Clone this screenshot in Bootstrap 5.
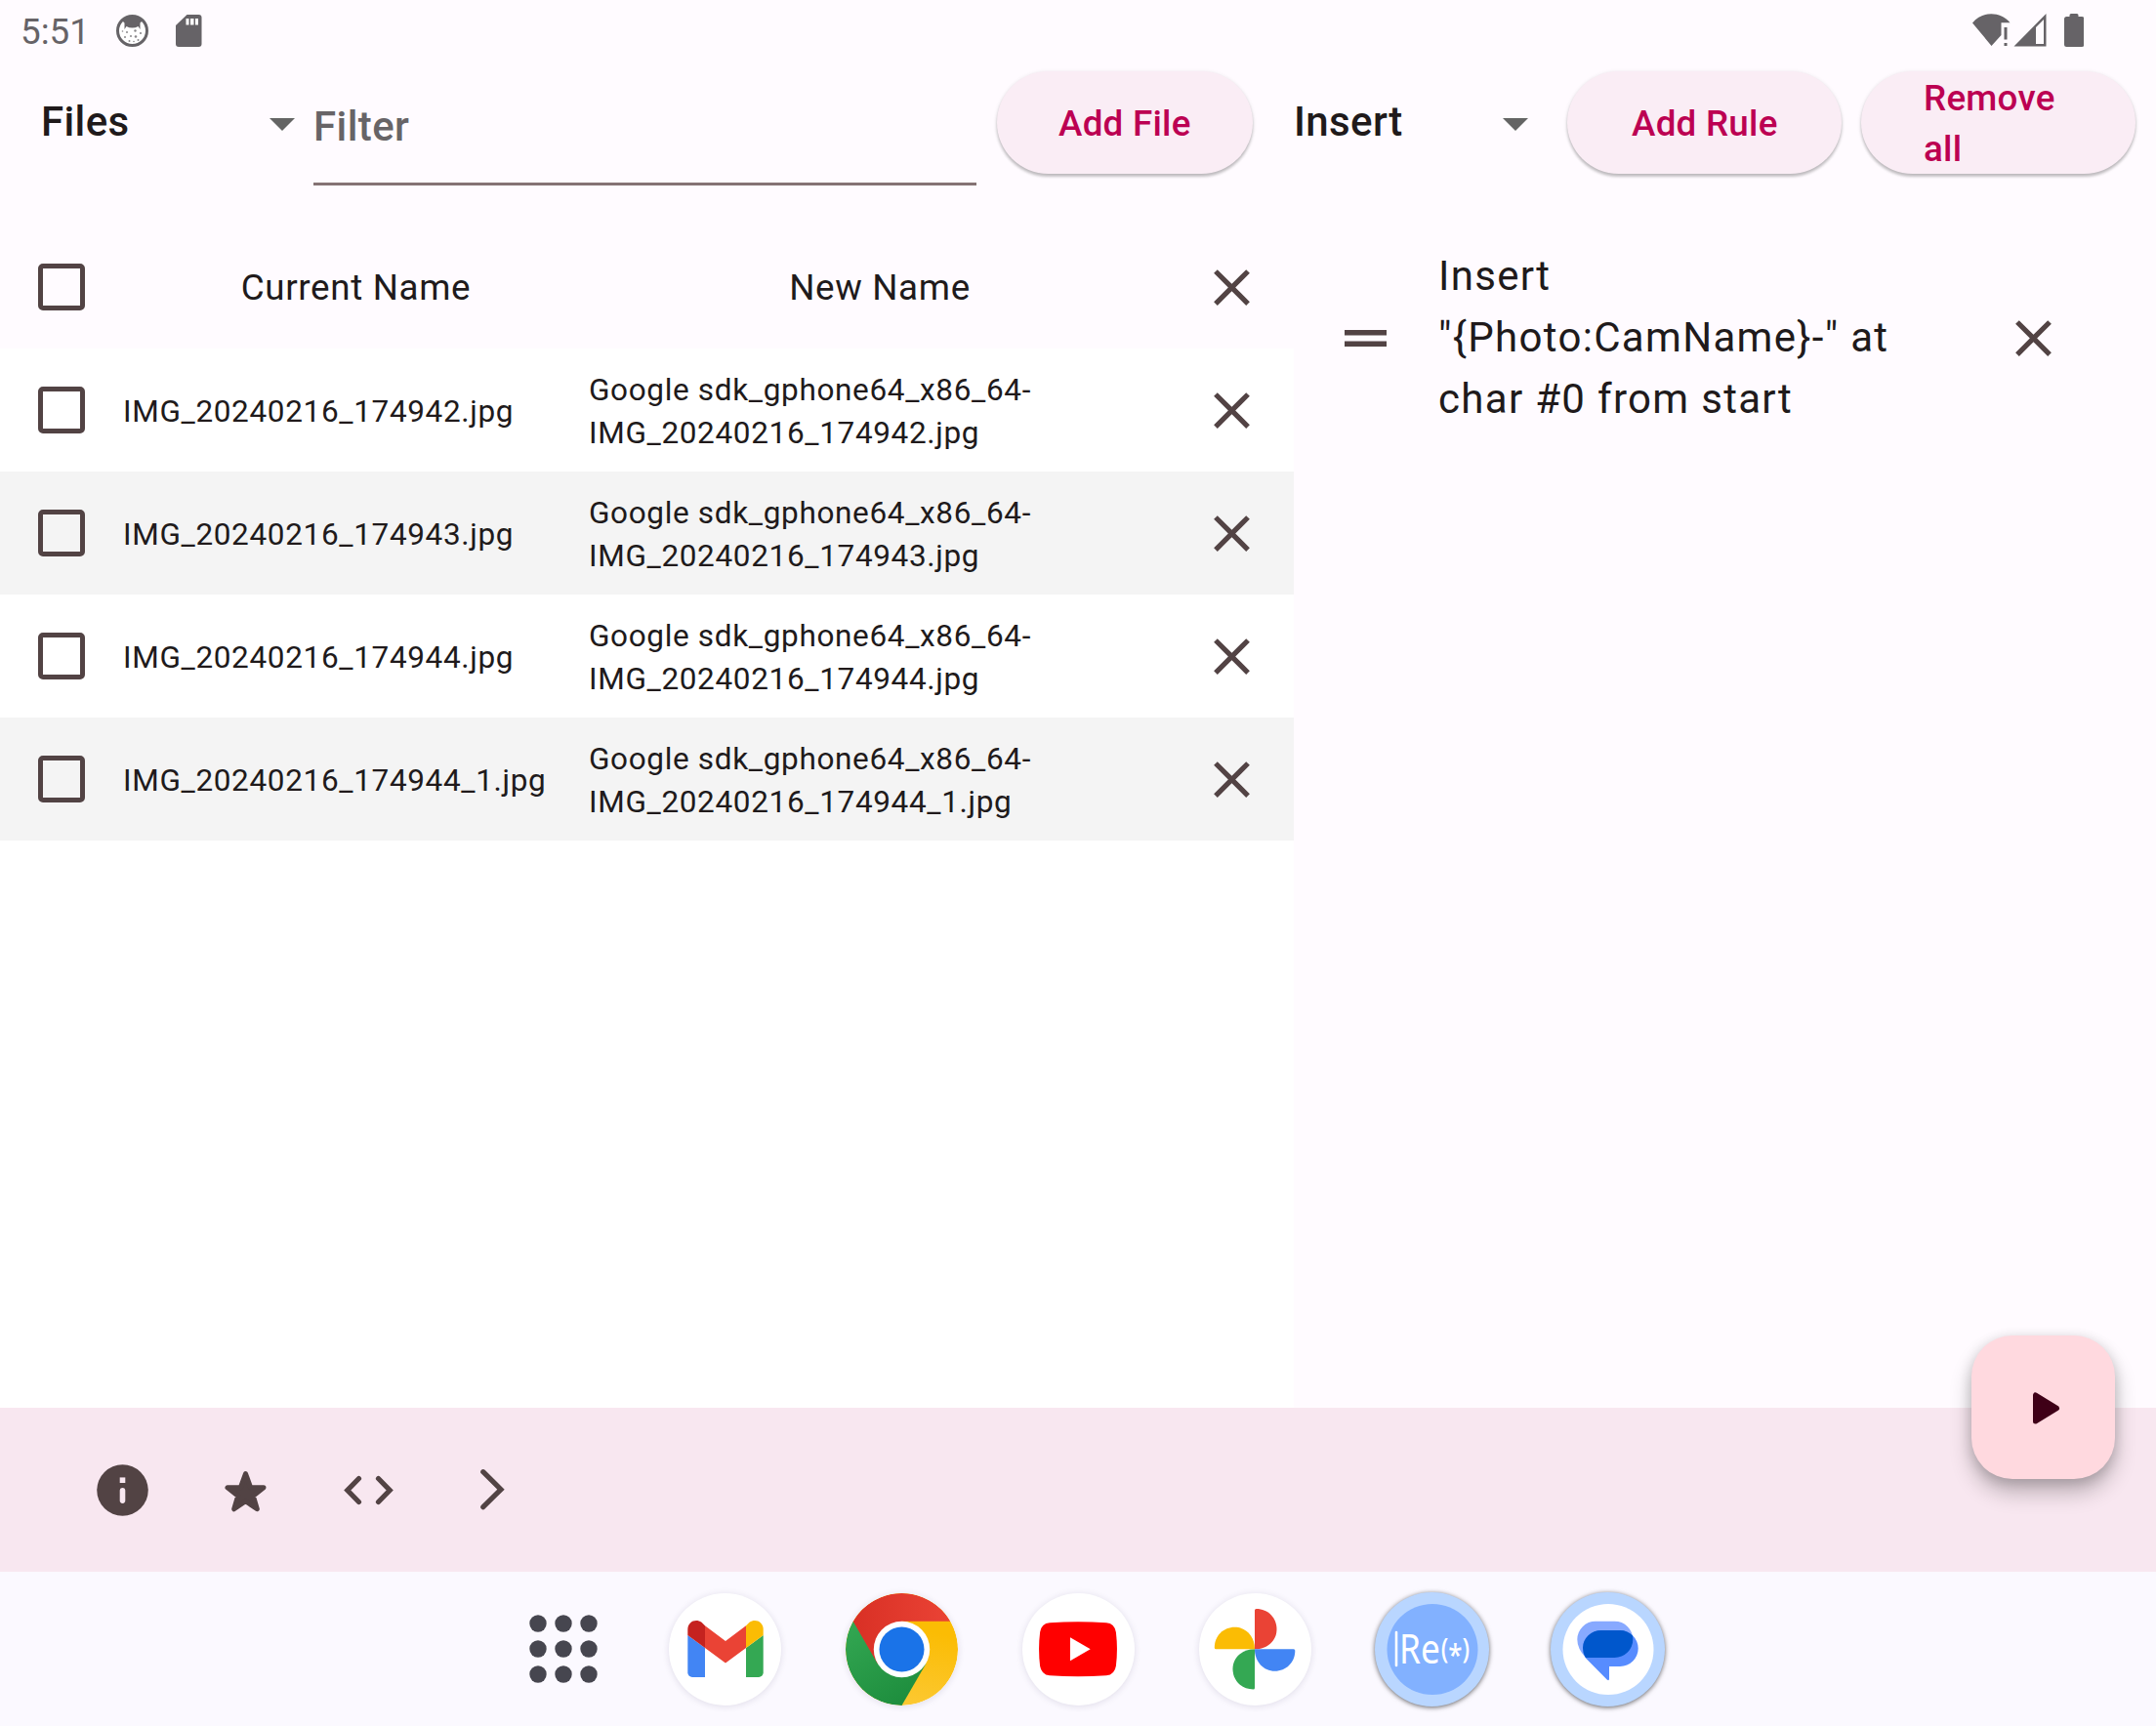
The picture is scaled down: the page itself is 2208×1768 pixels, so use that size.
<!DOCTYPE html>
<html lang="en">
<head>
<meta charset="utf-8">
<title>Renamer</title>
<meta name="viewport" content="width=device-width, initial-scale=1">
<link rel="stylesheet" href="https://cdn.jsdelivr.net/npm/bootstrap@5.3.0/dist/css/bootstrap.min.css">
<style>
  body { font-family: Roboto, sans-serif; background: #fffbff; color: #201a1b; width: 2208px; height: 1768px; overflow: hidden; }
  svg { display: block; flex: none; }
  .statusbar { height: 63px; padding: 0 74px 0 21px; color: #666367; font-size: 36.75px; line-height: 63px; }
  .clock { padding-top: 2px; }
  .tray-icons { margin-left: 27px; }
  .toolbar-row { height: 168px; }
  .files-side { width: 1325px; }
  .picker { font-size: 42px; font-weight: 500; letter-spacing: .39px; line-height: 63px; height: 126px; }
  .picker-files { width: 279px; margin-left: 42px; padding: 30px 19px 0 0; }
  .picker-rules { width: 254px; padding: 30px 14px 0 0; }
  .picker svg { margin-top: 28px; }
  .filter-input { width: 679px; height: 127px; border: 0; border-bottom: 3px solid #857374; background: none; font-size: 42px; font-weight: 500; letter-spacing: .4px; padding: 8px 0 0; color: #201a1b; border-radius: 0; }
  .filter-input::placeholder { color: #676467; opacity: 1; }
  .pill, .pill:hover { height: 105px; border: 0; border-radius: 53px; background: #faedf5; color: #bc0052; font-size: 36.75px; font-weight: 500; letter-spacing: .26px; line-height: 52px; text-align: left; box-shadow: 0 3px 3px rgba(0,0,0,.2), 0 1px 4px rgba(0,0,0,.12); margin-top: 10px; }
  .pill-file { width: 262px; margin-left: 21px; padding: 3px 0 0 63px; }
  .pill-rule { width: 281px; margin-left: 26px; padding: 3px 0 0 66px; }
  .pill-clear { width: 281px; margin-left: 20px; padding: 2px 63px 0 64px; }
  .main-area { height: 1211px; }
  .file-row { height: 126px; font-size: 31.5px; letter-spacing: .66px; line-height: 44px; }
  .file-row .cell-current, .file-row .cell-new { padding-top: 4px; }
  .file-head { font-size: 36.75px; text-align: center; }
  .file-head .cell-current, .file-head .cell-new { padding-top: 2px; }
  .file-list { background: #fff; }
  .file-row.shaded { background: #f4f4f4; }
  .cell-icon { width: 126px; height: 126px; color: #524344; }
  .files-side .cell-icon svg { margin-right: 1px; }
  .cell-current { width: 477px; }
  .cell-new { width: 596px; }
  .form-check-input.tick { width: 48px; height: 48px; border: 5.25px solid #524344; border-radius: 5px; background: none; margin: 0; }
  .rule-row { height: 231px; padding-left: 42px; }
  .rule-handle { width: 63px; color: #524344; }
  .rule-text { width: 546px; margin-left: 43px; padding-bottom: 2px; font-size: 42px; letter-spacing: 1.31px; line-height: 63px; }
  .bottom-bar { height: 168px; background: #f8e7f0; padding-left: 62.500px; color: #524344; }
  .run-fab { right: 42px; top: -74px; width: 147px; height: 147px; border-radius: 42px; background: #ffd9df; border: 0; padding: 0; color: #3f0017; box-shadow: 0 14px 22px rgba(0,0,0,.24), 0 3px 13px rgba(0,0,0,.16); }
  .taskbar { height: 158px; background: #fbf9ff; padding-left: 542px; }
  .app-icon { width: 115px; height: 115px; border-radius: 50%; background: #fff; margin-right: 66px; box-shadow: 0 1px 7px rgba(40,30,80,.13); overflow: hidden; flex: none; }
  .app-ring { width: 117px; height: 117px; border-radius: 50%; background: #b9d6ff; margin: 0 64px 0 -1px; box-shadow: 0 1px 5px rgba(0,0,0,.6); flex: none; }
  .grid-dots { margin-right: 73px; }
</style>
</head>
<body>
<svg width="0" height="0" class="position-absolute">
  <symbol id="cross" viewBox="0 0 24 24"><path fill="currentColor" d="M6.4 19 5 17.6l5.6-5.6L5 6.4 6.4 5l5.6 5.6L17.6 5 19 6.4 13.4 12l5.6 5.6-1.4 1.4-5.6-5.6z"/></symbol>
  <symbol id="caret" viewBox="0 0 26 13"><path fill="#646464" d="M0 0h26L13 13z"/></symbol>
</svg>

<header class="statusbar d-flex align-items-center">
  <span class="clock">5:51</span>
  <svg class="tray-icons" width="88" height="34" viewBox="0 0 88 34">
    <circle cx="16.500" cy="16.500" r="15" fill="#fff" stroke="#666367" stroke-width="3"/>
    <path fill="#666367" d="M6 6Q16.500-3 27 6L24.500 8.500V15L22.500 12Q20 13.500 16.500 13.500T10.500 12L8.500 15V8.500z"/>
    <g fill="#8a888b"><circle cx="11" cy="18" r="1"/><circle cx="19.500" cy="16.500" r="1.200"/><circle cx="25" cy="19" r="1.100"/><circle cx="15" cy="22" r="1"/><circle cx="20" cy="22.500" r="1.300"/><circle cx="9" cy="23" r="1"/><circle cx="13.500" cy="27" r="1"/><circle cx="22.500" cy="26" r="1"/><circle cx="18" cy="27.500" r=".8"/><circle cx="6.500" cy="17" r=".8"/></g>
    <path fill="#666367" d="M72.500 0H84.500a3 3 0 0 1 3 3v27a3 3 0 0 1-3 3h-20.500a3 3 0 0 1-3-3V11z"/>
    <path fill="#fff" d="M71.500 4h3v6.500h-3zM76 4h3.500v6.500H76zM81 4h3v6.500h-3z"/>
  </svg>
  <svg class="ms-auto" width="114" height="36" viewBox="0 0 114 36" fill="#666367">
    <path d="M0 9.500C10-2.800 28.500-2.800 38.500 9.200H29.500V22L19.500 33z"/>
    <path d="M32.500 14h3v12.500h-3zM32.500 30h3v3h-3z"/>
    <path fill-rule="evenodd" d="M75.500 0v33.500H42.500zM65 14v17h8V6z"/>
    <path d="M99.500 1.500a1.500 1.500 0 0 1 1.500-1.500h6a1.500 1.500 0 0 1 1.500 1.500V3h3.500a2.500 2.500 0 0 1 2.500 2.500v26a2.500 2.500 0 0 1-2.500 2.500H96.500a2.500 2.500 0 0 1-2.500-2.500V5.500A2.500 2.500 0 0 1 96.500 3h3z"/>
  </svg>
</header>

<div class="toolbar-row d-flex align-items-start">
  <div class="files-side d-flex align-items-start">
    <div class="picker picker-files d-flex justify-content-between"><span>Files</span><svg width="26" height="13"><use href="#caret"/></svg></div>
    <input class="filter-input" type="text" placeholder="Filter" aria-label="Filter">
    <button class="btn pill pill-file">Add File</button>
  </div>
  <div class="d-flex align-items-start">
    <div class="picker picker-rules d-flex justify-content-between"><span>Insert</span><svg width="26" height="13"><use href="#caret"/></svg></div>
    <button class="btn pill pill-rule">Add Rule</button>
    <button class="btn pill pill-clear">Remove all</button>
  </div>
</div>

<main class="main-area d-flex">
  <section class="files-side d-flex flex-column">
    <div class="file-row file-head d-flex align-items-center">
      <div class="cell-icon d-flex align-items-center justify-content-center"><input type="checkbox" class="form-check-input tick" aria-label="Select all"></div>
      <div class="cell-current">Current Name</div>
      <div class="cell-new">New Name</div>
      <div class="cell-icon d-flex align-items-center justify-content-center"><svg width="63" height="63"><use href="#cross"/></svg></div>
    </div>
    <div class="file-list flex-grow-1">
      <div class="file-row d-flex align-items-center">
        <div class="cell-icon d-flex align-items-center justify-content-center"><input type="checkbox" class="form-check-input tick"></div>
        <div class="cell-current">IMG_20240216_174942.jpg</div>
        <div class="cell-new">Google sdk_gphone64_x86_64-<br>IMG_20240216_174942.jpg</div>
        <div class="cell-icon d-flex align-items-center justify-content-center"><svg width="63" height="63"><use href="#cross"/></svg></div>
      </div>
      <div class="file-row shaded d-flex align-items-center">
        <div class="cell-icon d-flex align-items-center justify-content-center"><input type="checkbox" class="form-check-input tick"></div>
        <div class="cell-current">IMG_20240216_174943.jpg</div>
        <div class="cell-new">Google sdk_gphone64_x86_64-<br>IMG_20240216_174943.jpg</div>
        <div class="cell-icon d-flex align-items-center justify-content-center"><svg width="63" height="63"><use href="#cross"/></svg></div>
      </div>
      <div class="file-row d-flex align-items-center">
        <div class="cell-icon d-flex align-items-center justify-content-center"><input type="checkbox" class="form-check-input tick"></div>
        <div class="cell-current">IMG_20240216_174944.jpg</div>
        <div class="cell-new">Google sdk_gphone64_x86_64-<br>IMG_20240216_174944.jpg</div>
        <div class="cell-icon d-flex align-items-center justify-content-center"><svg width="63" height="63"><use href="#cross"/></svg></div>
      </div>
      <div class="file-row shaded d-flex align-items-center">
        <div class="cell-icon d-flex align-items-center justify-content-center"><input type="checkbox" class="form-check-input tick"></div>
        <div class="cell-current">IMG_20240216_174944_1.jpg</div>
        <div class="cell-new">Google sdk_gphone64_x86_64-<br>IMG_20240216_174944_1.jpg</div>
        <div class="cell-icon d-flex align-items-center justify-content-center"><svg width="63" height="63"><use href="#cross"/></svg></div>
      </div>
    </div>
  </section>
  <section class="flex-grow-1">
    <div class="rule-row d-flex align-items-center">
      <div class="rule-handle d-flex justify-content-center"><svg width="43" height="17" viewBox="0 0 43 17" fill="currentColor"><path d="M0 0h43v5.500H0zM0 11.500h43V17H0z"/></svg></div>
      <div class="rule-text">Insert<br>"{Photo:CamName}-" at<br>char #0 from start</div>
      <div class="cell-icon d-flex align-items-center justify-content-center"><svg width="63" height="63"><use href="#cross"/></svg></div>
    </div>
  </section>
</main>

<nav class="bottom-bar d-flex align-items-center position-relative">
  <div class="cell-icon d-flex align-items-center justify-content-center"><svg width="63" height="63" viewBox="0 0 63 63"><circle cx="31.500" cy="31.500" r="26.250" fill="currentColor"/><rect x="28.700" y="18.400" width="5.600" height="5.600" fill="#f8e7f0"/><rect x="28.700" y="28.900" width="5.600" height="16" rx="2.800" fill="#f8e7f0"/></svg></div>
  <div class="cell-icon d-flex align-items-center justify-content-center"><svg width="63" height="63" viewBox="0 0 63 63"><path d="M31.500 14.500 36.700 28.800H50L39.300 37.300 43.300 50.800 31.500 42.800 19.700 50.800 23.700 37.300 13 28.800H26.300z" fill="currentColor" stroke="currentColor" stroke-width="5" stroke-linejoin="round"/></svg></div>
  <div class="cell-icon d-flex align-items-center justify-content-center"><svg width="63" height="63" viewBox="0 0 63 63" fill="none" stroke="currentColor" stroke-width="5.200" stroke-linecap="round"><path d="M21.500 19.500 9.800 31.500 21.500 43.500M41.500 19.500 53.200 31.500 41.500 43.500"/></svg></div>
  <div class="cell-icon d-flex align-items-center justify-content-center"><svg width="63" height="63" viewBox="0 0 63 63" fill="none" stroke="currentColor" stroke-width="5.200" stroke-linecap="round"><path d="M22.800 12.700 41 30.700 22.800 48.700"/></svg></div>
  <button class="run-fab position-absolute"><svg width="147" height="147" viewBox="0 0 147 147"><path d="M65.500 61v27L87.500 74.500z" fill="currentColor" stroke="currentColor" stroke-width="5" stroke-linejoin="round"/></svg></button>
</nav>

<footer class="taskbar d-flex align-items-center">
  <svg class="grid-dots" width="70" height="70" viewBox="0 0 70 70" fill="#46464f">
    <circle cx="9" cy="9" r="8.700"/><circle cx="35" cy="9" r="8.700"/><circle cx="61" cy="9" r="8.700"/>
    <circle cx="9" cy="35" r="8.700"/><circle cx="35" cy="35" r="8.700"/><circle cx="61" cy="35" r="8.700"/>
    <circle cx="9" cy="61" r="8.700"/><circle cx="35" cy="61" r="8.700"/><circle cx="61" cy="61" r="8.700"/>
  </svg>
  <div class="app-icon"><svg width="115" height="115" viewBox="0 0 115 115">
    <path fill="#4285f4" d="M19.300 43 37 56v30H24a4.700 4.700 0 0 1-4.700-4.700z"/>
    <path fill="#34a853" d="M96.700 43 79 56v30h13a4.700 4.700 0 0 0 4.700-4.700z"/>
    <path fill="#ea4335" d="M37 33.300 58 49 79 33.300V56L58 71.500 37 56z"/>
    <path fill="#c5221f" d="M19.300 43v-6c0-8 8.500-11.500 14.200-7.200L37 33.300V56z"/>
    <path fill="#fbbc04" d="M96.700 43v-6c0-8-8.500-11.500-14.200-7.200L79 33.300V56z"/>
  </svg></div>
  <div class="app-icon"><svg width="115" height="115" viewBox="0 0 115 115">
    <defs>
      <linearGradient id="cr" x1="0" x2="1"><stop stop-color="#d93025"/><stop offset="1" stop-color="#ea4335"/></linearGradient>
      <linearGradient id="cg" x1="0" x2=".6" y2="1"><stop stop-color="#34a853"/><stop offset="1" stop-color="#1e8e3e"/></linearGradient>
      <linearGradient id="cy" x1=".6" y1="0" x2=".4" y2="1"><stop offset=".3" stop-color="#fbbc04"/><stop offset="1" stop-color="#fcc934"/></linearGradient>
    </defs>
    <circle cx="57.500" cy="57.500" r="57.500" fill="url(#cy)"/>
    <path fill="url(#cg)" d="M7.700 28.800A57.500 57.500 0 0 0 57.500 115L82.400 71.900 57.500 57.500z"/>
    <path fill="url(#cr)" d="M7.700 28.800A57.500 57.500 0 0 1 107.300 28.800H57.500v28.700L32.600 71.900z"/>
    <circle cx="57.500" cy="57.500" r="28.700" fill="#fff"/><circle cx="57.500" cy="57.500" r="23" fill="#1a73e8"/>
  </svg></div>
  <div class="app-icon"><svg width="115" height="115" viewBox="0 0 115 115">
    <path fill="red" d="M28 30.300Q57 28.300 86 30.300 94.500 31 95.900 40 98 57.500 95.900 74.500 94.500 83.500 86 84.300 57 86.300 28 84.300 19.500 83.500 18.100 74.500 16 57.500 18.100 40 19.500 31 28 30.300z"/>
    <path fill="#fff" d="M49 45.300v24L69.700 57.300z"/>
  </svg></div>
  <div class="app-icon"><svg width="115" height="115" viewBox="0 0 115 115">
    <path fill="#ea4335" d="M57 57.300V17.500Q57 16 58.500 16C71 16 79.500 25.500 79.500 37S70 57.300 57 57.300z"/>
    <path fill="#4285f4" d="M57 57.300H96.800Q98.300 57.300 98.300 58.800C98.300 71 89 79.800 77.500 79.800S57 70.300 57 57.300z"/>
    <path fill="#34a853" d="M57 57.300V97Q57 98.500 55.500 98.500C43 98.500 34.500 89 34.500 77.500S44 57.300 57 57.300z"/>
    <path fill="#fbbc04" d="M57 57.300H17.300Q15.800 57.300 15.800 55.800C15.800 43.500 25 34.800 36.500 34.800S57 44.300 57 57.300z"/>
  </svg></div>
  <div class="app-ring"><svg width="117" height="117" viewBox="0 0 117 117">
    <circle cx="59" cy="58.500" r="46.500" fill="#82b1ff"/>
    <path d="M22 41v34" stroke="#fff" stroke-width="2.600" stroke-linecap="round"/>
    <text transform="translate(25 73.300) scale(.84 1)" font-family="Noto Sans, sans-serif" font-size="42" fill="#fff">Re<tspan font-size="29" font-weight="500" dx="1" dy="-5">(</tspan><tspan font-size="31" font-weight="500" dy="6.500">*</tspan><tspan font-size="29" font-weight="500" dy="-6.500">)</tspan></text>
  </svg></div>
  <div class="app-ring"><svg width="117" height="117" viewBox="0 0 117 117">
    <defs><clipPath id="back"><path d="M46 29.700H65.600a18.650 18.650 0 0 1 18.700 18.650A18.700 18.700 0 0 1 65.600 67H36Q27.300 58 27.300 48.300A18.700 18.700 0 0 1 46 29.700z"/></clipPath></defs>
    <circle cx="59" cy="58.500" r="46.500" fill="#fff"/>
    <path fill="#87a9ff" d="M46 29.700H65.600a18.650 18.650 0 0 1 18.700 18.650A18.700 18.700 0 0 1 65.600 67H36Q27.300 58 27.300 48.300A18.700 18.700 0 0 1 46 29.700z"/>
    <path fill="#578cff" d="M52 39H71.200a18.500 18.500 0 0 1 0 37H60V88.500Q60 91 58 89.800L36 67.500Q33 63 33 57A19 18 0 0 1 52 39z"/>
    <path clip-path="url(#back)" fill="#0057cc" d="M52 39H71.200a18.500 18.500 0 0 1 0 37H60V88.500Q60 91 58 89.800L36 67.500Q33 63 33 57A19 18 0 0 1 52 39z"/>
  </svg></div>
</footer>
<script src="https://cdn.jsdelivr.net/npm/bootstrap@5.3.0/dist/js/bootstrap.bundle.min.js"></script>
</body>
</html>
